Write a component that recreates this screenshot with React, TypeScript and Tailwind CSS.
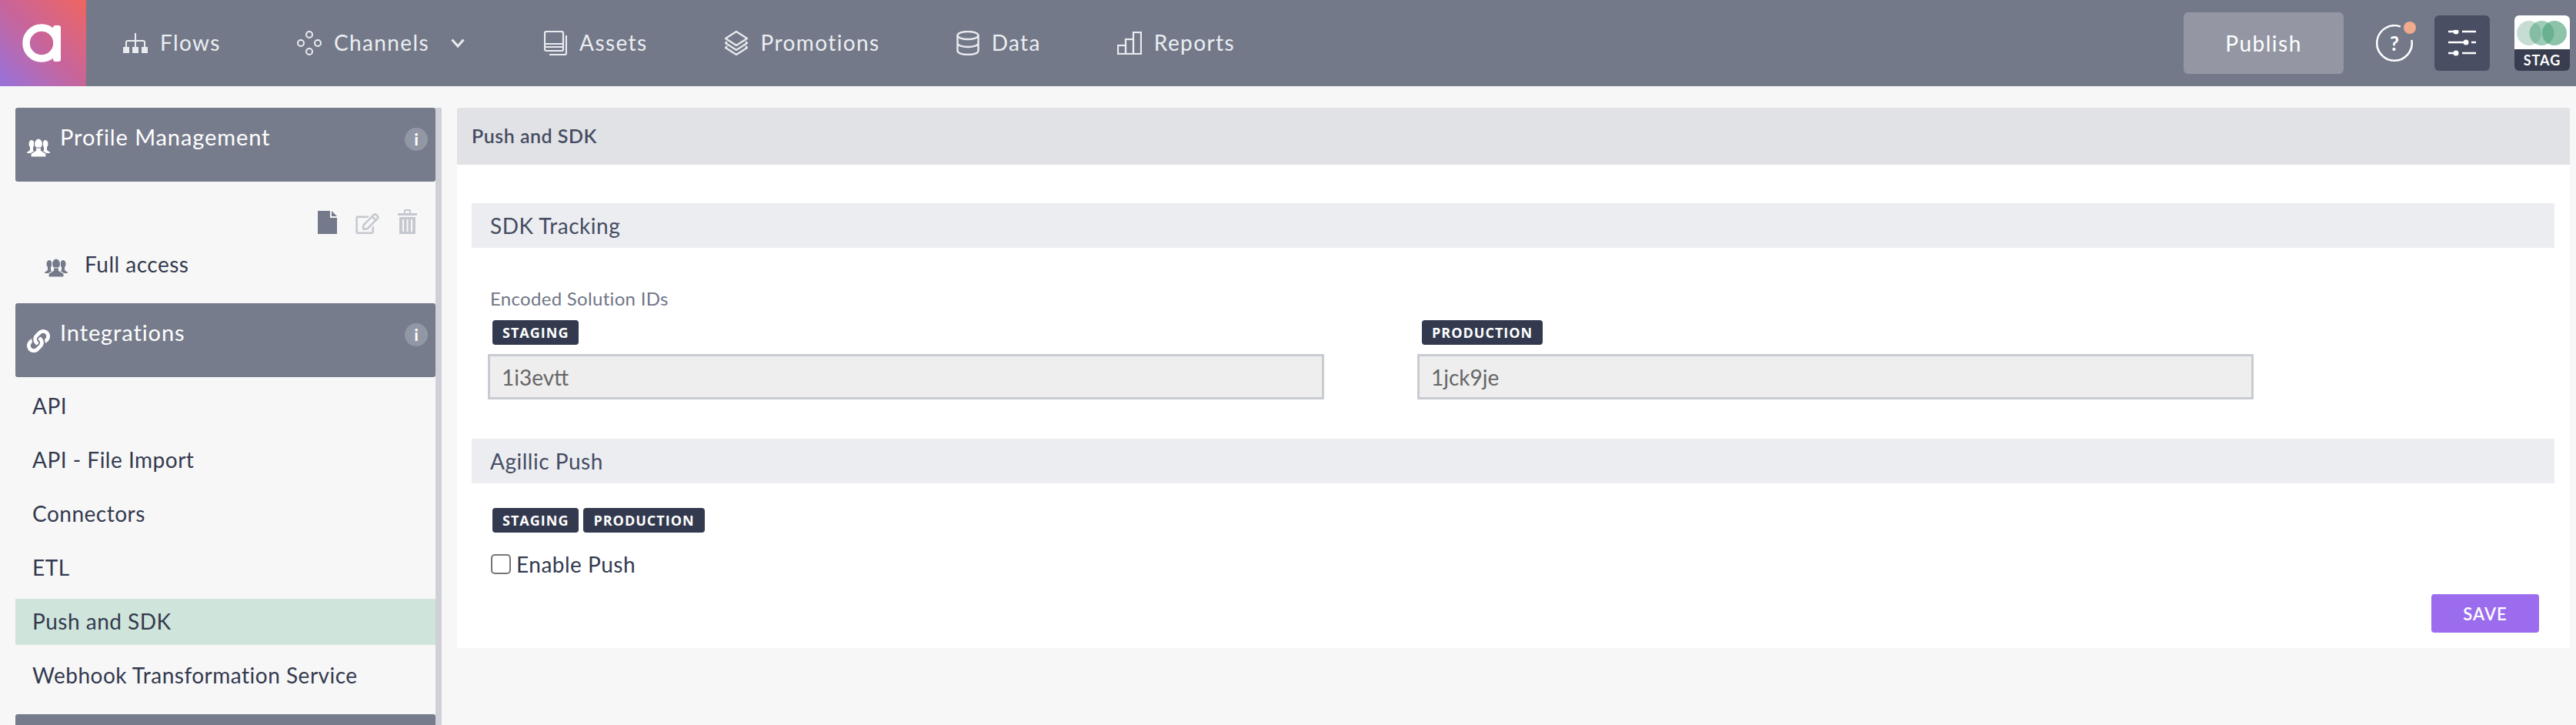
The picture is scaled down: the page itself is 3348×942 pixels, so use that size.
import type { ReactNode } from 'react'
import { FaLink, FaRegEdit } from 'react-icons/fa'

function Logo() {
  return (
    <div className="flex h-full w-[112px] shrink-0 items-center justify-center bg-linear-to-tr from-[#9670dc] via-[#c8649a] to-[#f0645f]">
      <svg width="52" height="52" viewBox="0 0 52 52" fill="none" className="ml-[-2px]">
        <circle cx="25" cy="26" r="20" stroke="white" strokeWidth="9.500" />
        <rect x="40" y="3" width="10" height="47" rx="3" fill="white" />
      </svg>
    </div>
  )
}

function FlowsIcon() {
  return (
    <svg width="32" height="26" viewBox="0 0 32 26" fill="none" stroke="#e9ebef" strokeWidth="2">
      <path d="M16 0v19M4 19v-7a2 2 0 0 1 2-2h20a2 2 0 0 1 2 2v7" />
      <rect x="1" y="19" width="6" height="6" fill="#e9ebef" />
      <rect x="13" y="19" width="6" height="6" fill="#e9ebef" />
      <rect x="25" y="19" width="6" height="6" fill="#e9ebef" />
    </svg>
  )
}

function ChannelsIcon() {
  return (
    <svg width="32" height="32" viewBox="0 0 32 32" fill="none" stroke="#e9ebef" strokeWidth="2">
      <ellipse cx="16" cy="5" rx="4" ry="4" />
      <ellipse cx="5" cy="16" rx="4" ry="4" />
      <ellipse cx="27" cy="16" rx="4" ry="4" />
      <ellipse cx="16" cy="27" rx="4" ry="4" />
    </svg>
  )
}

function AssetsIcon() {
  return (
    <svg width="30" height="32" viewBox="0 0 30 32" fill="none" stroke="#e9ebef" strokeWidth="2.200">
      <rect x="1" y="1" width="24" height="25" rx="2" />
      <path d="M1 17h24M1 21h24M29 6v23a2 2 0 0 1-2 2H7" />
    </svg>
  )
}

function PromotionsIcon() {
  return (
    <svg width="32" height="32" viewBox="0 0 32 32" fill="none" stroke="#e9ebef" strokeWidth="2.200" strokeLinejoin="round">
      <path d="M16 1 30 10 16 19 2 10Z" />
      <path d="M4 14 2 16l14 9 14-9-2-2" />
      <path d="M4 20l-2 2 14 9 14-9-2-2" />
    </svg>
  )
}

function DataIcon() {
  return (
    <svg width="30" height="32" viewBox="0 0 30 32" fill="none" stroke="#e9ebef" strokeWidth="2.400">
      <ellipse cx="15" cy="6" rx="13.500" ry="5" />
      <path d="M1.500 6v20c0 3 6 5 13.500 5s13.500-2 13.500-5V6M1.500 16c0 3 6 5 13.500 5s13.500-2 13.500-5" />
    </svg>
  )
}

function ReportsIcon() {
  return (
    <svg width="32" height="30" viewBox="0 0 32 30" fill="none" stroke="#e9ebef" strokeWidth="2.200">
      <rect x="1" y="18" width="10" height="11" />
      <rect x="11" y="10" width="10" height="19" />
      <rect x="21" y="1" width="10" height="28" />
    </svg>
  )
}

function NavItem({ icon, label }: { icon: ReactNode; label: string }) {
  return (
    <div className="flex items-center gap-4">
      {icon}
      <span className="pb-[2px] text-[28px] tracking-[1.4px] text-[#eceef2]">{label}</span>
    </div>
  )
}

function Sliders() {
  return (
    <svg width="36" height="34" viewBox="0 0 36 34" fill="none" stroke="white" strokeWidth="2.500">
      <path d="M0 2h8M18 2h18M0 16h20M30 16h6M0 30h8M18 30h18" />
      <circle cx="10" cy="2" r="3.500" fill="white" stroke="none" />
      <circle cx="23" cy="16" r="3.500" fill="white" stroke="none" />
      <circle cx="10" cy="30" r="3.500" fill="white" stroke="none" />
    </svg>
  )
}

function HelpIcon() {
  return (
    <div className="relative ml-[42px] flex h-12 w-12 items-center justify-center text-[26px] font-bold text-white">
      <svg width="48" height="48" viewBox="0 0 48 48" fill="none" stroke="white" strokeWidth="2.500" className="absolute inset-0">
        <path d="M46.400 20A22.750 22.750 0 1 1 31.800 2.600" />
      </svg>
      ?
      <span className="absolute -right-1 -top-1 h-4 w-4 rounded-full bg-[#f0aa8c]" />
    </div>
  )
}

function Header() {
  return (
    <header className="flex h-[112px] shrink-0 items-center bg-[#737989]">
      <Logo />
      <nav className="ml-12 flex items-center gap-[99px]">
        <NavItem icon={<FlowsIcon />} label="Flows" />
        <div className="mr-1 flex items-center gap-7">
          <NavItem icon={<ChannelsIcon />} label="Channels" />
          <svg width="18" height="12" viewBox="0 0 18 12" fill="none" stroke="#e9ebef" strokeWidth="3">
            <path d="M1.500 1.500 9 10l7.500-8.500" />
          </svg>
        </div>
        <NavItem icon={<AssetsIcon />} label="Assets" />
        <NavItem icon={<PromotionsIcon />} label="Promotions" />
        <NavItem icon={<DataIcon />} label="Data" />
        <NavItem icon={<ReportsIcon />} label="Reports" />
      </nav>
      <div className="ml-auto flex items-center pr-2">
        <button className="h-20 w-52 rounded-md bg-[#9497a3] text-[28px] tracking-[1.5px] text-white">Publish</button>
        <HelpIcon />
        <div className="ml-7 flex h-[72px] w-[72px] items-center justify-center rounded-md bg-[#494e63]">
          <Sliders />
        </div>
        <div className="ml-8 flex h-[72px] w-[72px] flex-col overflow-hidden rounded-md">
          <div className="h-11 bg-white">
            <svg width="72" height="44" viewBox="0 0 72 44">
              <circle cx="19" cy="23" r="16" fill="#c7ddd3" />
              <circle cx="35.500" cy="23" r="16" fill="#4fa37b" fillOpacity="0.55" />
              <circle cx="52" cy="23" r="16" fill="#4fa37b" fillOpacity="0.65" />
            </svg>
          </div>
          <div className="flex flex-1 items-center justify-center bg-[#393d50] text-[18px] font-bold tracking-[1px] text-white">
            STAG
          </div>
        </div>
      </div>
    </header>
  )
}

function UsersIcon({ color, bg }: { color: string; bg: string }) {
  return (
    <svg width="32" height="24" viewBox="0 0 32 24" fill={color}>
      <ellipse cx="7" cy="7" rx="3.500" ry="5" />
      <ellipse cx="25" cy="7" rx="3.500" ry="5" />
      <path d="M5 11h4v4l3 4H1v-1l4-3Z" />
      <path d="M27 11h-4v4l-3 4h11v-1l-4-3Z" />
      <ellipse cx="16" cy="7" rx="5.500" ry="7" stroke={bg} strokeWidth="1.200" />
      <path d="M12.500 12h7v3.500l6.500 4V24H6v-4.500l6.500-4Z" stroke={bg} strokeWidth="1.200" />
    </svg>
  )
}

function PanelHeader({ icon, title }: { icon: ReactNode; title: string }) {
  return (
    <div className="flex h-24 items-start rounded-[3px] bg-[#777c8c] pr-[10px] text-white">
      <div className="flex h-full w-[58px] items-end justify-center pb-[32px] pl-[2px]">{icon}</div>
      <h2 className="mt-[19px] text-[29px] leading-[38px] tracking-[0.9px]">{title}</h2>
      <span className="ml-auto mt-[26px] flex h-[30px] w-[30px] items-center justify-center rounded-full bg-[#9297a5] text-[20px] font-black">
        i
      </span>
    </div>
  )
}

function Sidebar() {
  const items = ['API', 'API - File Import', 'Connectors', 'ETL', 'Push and SDK', 'Webhook Transformation Service']
  return (
    <aside className="ml-5 mt-7 w-[554px] shrink-0 border-r-8 border-[#d0d1d8]">
      <PanelHeader icon={<UsersIcon color="white" bg="#777c8c" />} title="Profile Management" />
      <div className="mt-9 flex h-8 items-end justify-end gap-6 pr-6">
        <svg width="25" height="30" viewBox="0 0 25 30" fill="#747a8b">
          <path d="M0 0h16v9h9v21H0ZM18 0l7 7h-7Z" />
        </svg>
        <FaRegEdit className="h-[27px] w-[31px] text-[#c5c8d0]" />
        <svg width="25" height="32" viewBox="0 0 25 32" fill="#c5c8d0">
          <path d="M0 5h8V1.500A1.500 1.500 0 0 1 9.500 0h6A1.500 1.500 0 0 1 17 1.500V5h8v3H0ZM10 5h5V2h-5Z" />
          <path d="M2 10h21v22H2ZM6 13v16h2V13Zm5.500 0v16h2V13Zm5.500 0v16h2V13Z" fillRule="evenodd" />
        </svg>
      </div>
      <div className="mt-[17px] flex h-[44px] items-center pl-[37px]">
        <span className="mt-[10px]">
          <UsersIcon color="#747a8b" bg="#f7f7f7" />
        </span>
        <span className="ml-[21px] text-[28px] tracking-[0.5px] text-[#333a4f]">Full access</span>
      </div>
      <div className="mt-[29px]">
        <PanelHeader icon={<FaLink className="h-[30px] w-[30px]" />} title="Integrations" />
      </div>
      <ul className="mt-2 flex flex-col gap-[10px]">
        {items.map((item) => (
          <li
            key={item}
            className={`flex h-[60px] items-center pb-[2px] pl-[22px] text-[28px] tracking-[0.5px] text-[#333a4f] ${item === 'Push and SDK' ? 'bg-[#cfe4da]' : ''}`}
          >
            {item}
          </li>
        ))}
      </ul>
      <div className="mt-5 h-24 rounded-[3px] bg-[#777c8c]" />
    </aside>
  )
}

function Badge({ children }: { children: string }) {
  return (
    <span className="flex h-8 items-center rounded-[4px] bg-[#333a4f] px-[13px] font-['Open_Sans',sans-serif] text-[18px] font-bold tracking-[1px] text-white">
      {children}
    </span>
  )
}

function SectionBar({ title }: { title: string }) {
  return (
    <div className="flex h-[58px] items-center bg-[#ecedf1] pl-6 text-[28px] tracking-[0.5px] text-[#454c62]">{title}</div>
  )
}

function SolutionField({ env, value }: { env: string; value: string }) {
  return (
    <div className="w-[1087px]">
      <div className="ml-[6px] flex">
        <Badge>{env}</Badge>
      </div>
      <input
        readOnly
        value={value}
        className="mt-3 h-[59px] w-full border-[3px] border-[#c8cbd2] bg-[#eeeeee] pl-[15px] text-[28px] text-[#666666] outline-none"
      />
    </div>
  )
}

function Main() {
  return (
    <main className="ml-5 mr-2 mt-7 flex-1 self-start bg-white">
      <div className="flex h-[74px] items-center rounded-t-[3px] bg-[#e1e2e6] pl-[19px] text-[25px] font-semibold tracking-[0.5px] text-[#454c62]">
        Push and SDK
      </div>
      <div className="pb-5 pl-[19px] pr-5 pt-[50px]">
        <SectionBar title="SDK Tracking" />
        <p className="ml-6 mt-[52px] text-[24px] leading-7 tracking-[0.3px] text-[#6f7687]">Encoded Solution IDs</p>
        <div className="ml-[21px] mt-[14px] flex gap-[121px]">
          <SolutionField env="STAGING" value="1i3evtt" />
          <SolutionField env="PRODUCTION" value="1jck9je" />
        </div>
        <div className="mt-[51px]">
          <SectionBar title="Agillic Push" />
        </div>
        <div className="ml-[27px] mt-8 flex gap-[6px]">
          <Badge>STAGING</Badge>
          <Badge>PRODUCTION</Badge>
        </div>
        <label className="ml-[25px] mt-7 flex h-[26px] items-center gap-[7px] text-[28px] tracking-[0.5px] text-[#333a4f]">
          <span className="h-[26px] w-[26px] rounded-[5px] border-2 border-[#767676] bg-white" />
          Enable Push
        </label>
        <div className="mt-[26px] flex justify-end pr-5">
          <button className="h-[50px] w-[140px] rounded-[4px] bg-[#9b6dee] text-[22px] font-semibold tracking-[1px] text-white">
            SAVE
          </button>
        </div>
      </div>
    </main>
  )
}

export default function App() {
  return (
    <div className="flex h-[942px] flex-col overflow-hidden bg-[#f7f7f7] font-['Lato',sans-serif]">
      <Header />
      <div className="flex min-h-0 flex-1">
        <Sidebar />
        <Main />
      </div>
    </div>
  )
}
